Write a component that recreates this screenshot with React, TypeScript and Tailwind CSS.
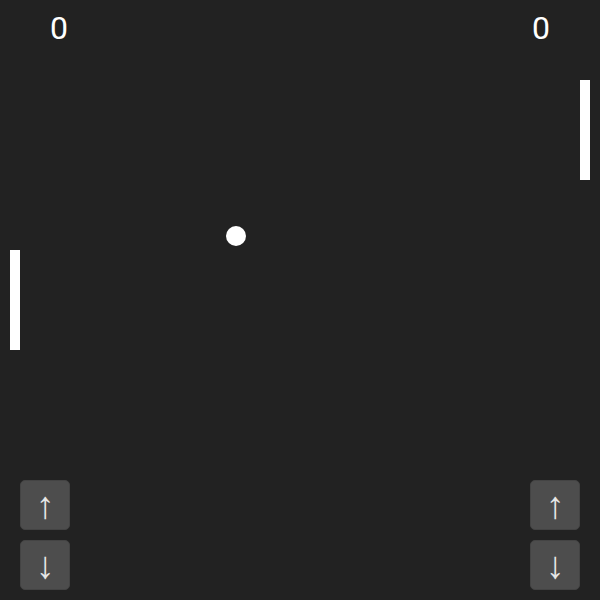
import { useState } from 'react';

type Side = 'left' | 'right';

const BOARD = 600;
const PADDLE_H = 100;

function Controls({ onMove }: { onMove: (dir: -1 | 1) => void }) {
  return (
    <div className="flex flex-col gap-[10px]">
      <button
        onClick={() => onMove(-1)}
        className="w-[50px] h-[50px] rounded-[5px] bg-[#4d4d4d] border border-[#444] text-[#e6e6e6] text-[38px] leading-none flex items-center justify-center"
      >
        ↑
      </button>
      <button
        onClick={() => onMove(1)}
        className="w-[50px] h-[50px] rounded-[5px] bg-[#4d4d4d] border border-[#444] text-[#e6e6e6] text-[38px] leading-none flex items-center justify-center"
      >
        ↓
      </button>
    </div>
  );
}

export default function App() {
  const [scores] = useState({ left: 0, right: 0 });
  const [paddles, setPaddles] = useState({ left: 250, right: 80 });
  const ball = { x: 236, y: 236 };

  const move = (side: Side, dir: -1 | 1) => {
    setPaddles((p) => ({
      ...p,
      [side]: Math.min(BOARD - PADDLE_H, Math.max(0, p[side] + dir * 20)),
    }));
  };

  return (
    <div
      className="relative w-[600px] h-[600px] bg-[#222222] overflow-hidden flex flex-col justify-between"
      style={{ fontFamily: 'Roboto, "Open Sans", sans-serif' }}
    >
      {/* scoreboard */}
      <div className="flex justify-between px-[50px] pt-[8px] text-white text-[32px] leading-[40px]">
        <span className="w-[18px] text-center">{scores.left}</span>
        <span className="w-[18px] text-center">{scores.right}</span>
      </div>

      {/* paddles and ball */}
      <div
        className="absolute left-[10px] w-[10px] h-[100px] bg-white"
        style={{ top: paddles.left }}
      />
      <div
        className="absolute left-[580px] w-[10px] h-[100px] bg-white"
        style={{ top: paddles.right }}
      />
      <div
        className="absolute w-[20px] h-[20px] rounded-full bg-white"
        style={{ left: ball.x - 10, top: ball.y - 10 }}
      />

      {/* touch controls */}
      <div className="flex justify-between px-[20px] pb-[10px]">
        <Controls onMove={(d) => move('left', d)} />
        <Controls onMove={(d) => move('right', d)} />
      </div>
    </div>
  );
}
